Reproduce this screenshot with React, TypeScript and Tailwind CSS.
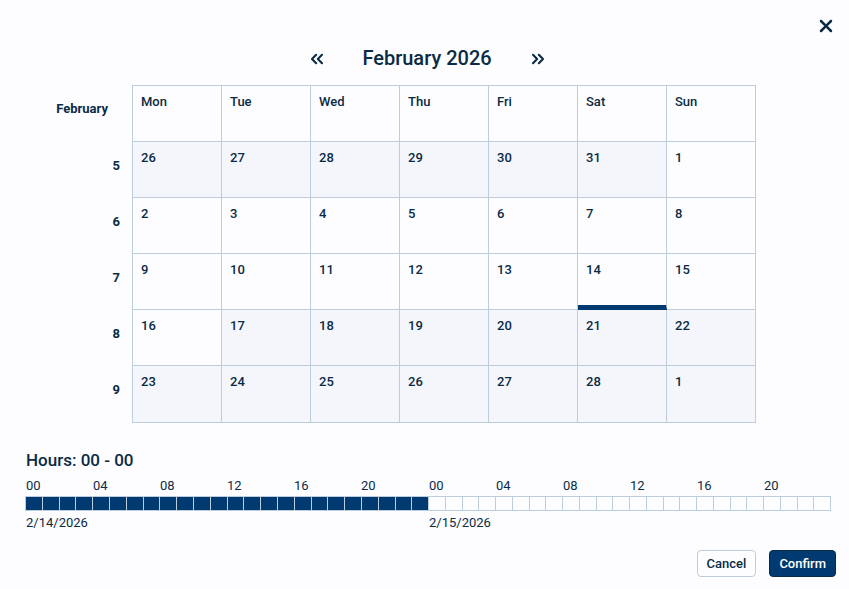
import { useState } from "react";
import { ChevronsLeft, ChevronsRight } from "lucide-react";
import { FaXmark } from "react-icons/fa6";

const weekdays = ["Mon", "Tue", "Wed", "Thu", "Fri", "Sat", "Sun"];

const weeks = [
  { week: 5, days: [26, 27, 28, 29, 30, 31, 1] },
  { week: 6, days: [2, 3, 4, 5, 6, 7, 8] },
  { week: 7, days: [9, 10, 11, 12, 13, 14, 15] },
  { week: 8, days: [16, 17, 18, 19, 20, 21, 22] },
  { week: 9, days: [23, 24, 25, 26, 27, 28, 1] },
];

// days that can be picked, counted from the first cell of the grid
const FIRST_OPEN = 6;
const LAST_OPEN = 21;

const dates = ["2/14/2026", "2/15/2026"];
const hourLabels = ["00", "04", "08", "12", "16", "20"];
const hours = Array.from({ length: 24 }, (_, i) => i);

export default function App() {
  const [selected, setSelected] = useState(19);

  return (
    <div className="min-h-screen bg-[#fdfdff] font-['Roboto',sans-serif] text-[#0b2b45]">
      <div role="dialog" aria-label="Select date and hours" className="flex flex-col pt-4 pr-[13px] pb-3 pl-[25px]">
        <button type="button" aria-label="Close" className="self-end">
          <FaXmark size={20} />
        </button>

        <div className="flex items-center justify-center pt-2 pr-[7px] pb-[13px]">
          <button type="button" aria-label="Previous month" className="pt-0.5">
            <ChevronsLeft size={20} strokeWidth={2.5} />
          </button>
          <h2 className="w-[201px] text-center text-xl leading-7 font-medium">February 2026</h2>
          <button type="button" aria-label="Next month" className="pt-0.5">
            <ChevronsRight size={20} strokeWidth={2.5} />
          </button>
        </div>

        <div className="pr-20">
          <table className="w-full table-fixed border-separate border-spacing-0 text-[13px] leading-4">
            <thead>
              <tr className="h-[57px]">
                <th scope="col" className="w-[108px] border-r border-[#bccddb] pt-4 pr-6 text-right align-top font-bold">
                  February
                </th>
                {weekdays.map((day) => (
                  <th
                    key={day}
                    scope="col"
                    className="border-t border-r border-b border-[#bccddb] pt-2 pl-2 text-left align-top font-medium"
                  >
                    {day}
                  </th>
                ))}
              </tr>
            </thead>
            <tbody>
              {weeks.map(({ week, days }, row) => (
                <tr key={week} className="h-14 last:h-[57px]">
                  <th scope="row" className="border-r border-[#bccddb] pt-4 pr-3 text-right align-top font-bold">
                    {week}
                  </th>
                  {days.map((day, col) => {
                    const index = row * 7 + col;
                    const open = index >= FIRST_OPEN && index <= LAST_OPEN;
                    return (
                      <td
                        key={index}
                        className={`border-r border-[#bccddb] p-0 align-top ${open ? "" : "bg-[#f5f6fb]"} ${
                          index === selected ? "border-b-[5px] border-b-[#003a70]" : "border-b"
                        }`}
                      >
                        <button
                          type="button"
                          disabled={!open}
                          onClick={() => setSelected(index)}
                          className="block w-full pt-2 pb-6 pl-2 text-left font-medium"
                        >
                          {day}
                        </button>
                      </td>
                    );
                  })}
                </tr>
              ))}
            </tbody>
          </table>
        </div>

        <div className="pt-[25px] pr-[5px]">
          <h3 className="pl-px text-[17px] leading-6 font-medium">Hours: 00 - 00</h3>
          <div className="flex pt-1.5 text-[13px] leading-4">
            {dates.map((date, d) => (
              <div key={date} className="flex-1">
                <div className="grid grid-cols-6 pb-0.5 pl-px">
                  {hourLabels.map((label) => (
                    <span key={label}>{label}</span>
                  ))}
                </div>
                <div className={`flex h-[15px] border-y border-[#bccddb] ${d === 1 ? "border-r" : ""}`}>
                  {hours.map((hour) => (
                    <button
                      key={hour}
                      type="button"
                      aria-label={`${date} ${hour}:00`}
                      aria-pressed={d === 0}
                      className={`flex-1 border-l border-[#bccddb] ${d === 0 ? "bg-[#003a70]" : ""}`}
                    />
                  ))}
                </div>
                <p className="pt-1 pl-px">{date}</p>
              </div>
            ))}
          </div>
        </div>

        <div className="flex justify-end gap-[13px] pt-[19px] text-[13px] leading-4 font-medium">
          <button type="button" className="h-[27px] rounded border border-[#bccddb] px-[9px]">
            Cancel
          </button>
          <button type="button" className="h-[27px] rounded border border-[#0b2b45] bg-[#003a70] px-[9px] text-white">
            Confirm
          </button>
        </div>
      </div>
    </div>
  );
}
